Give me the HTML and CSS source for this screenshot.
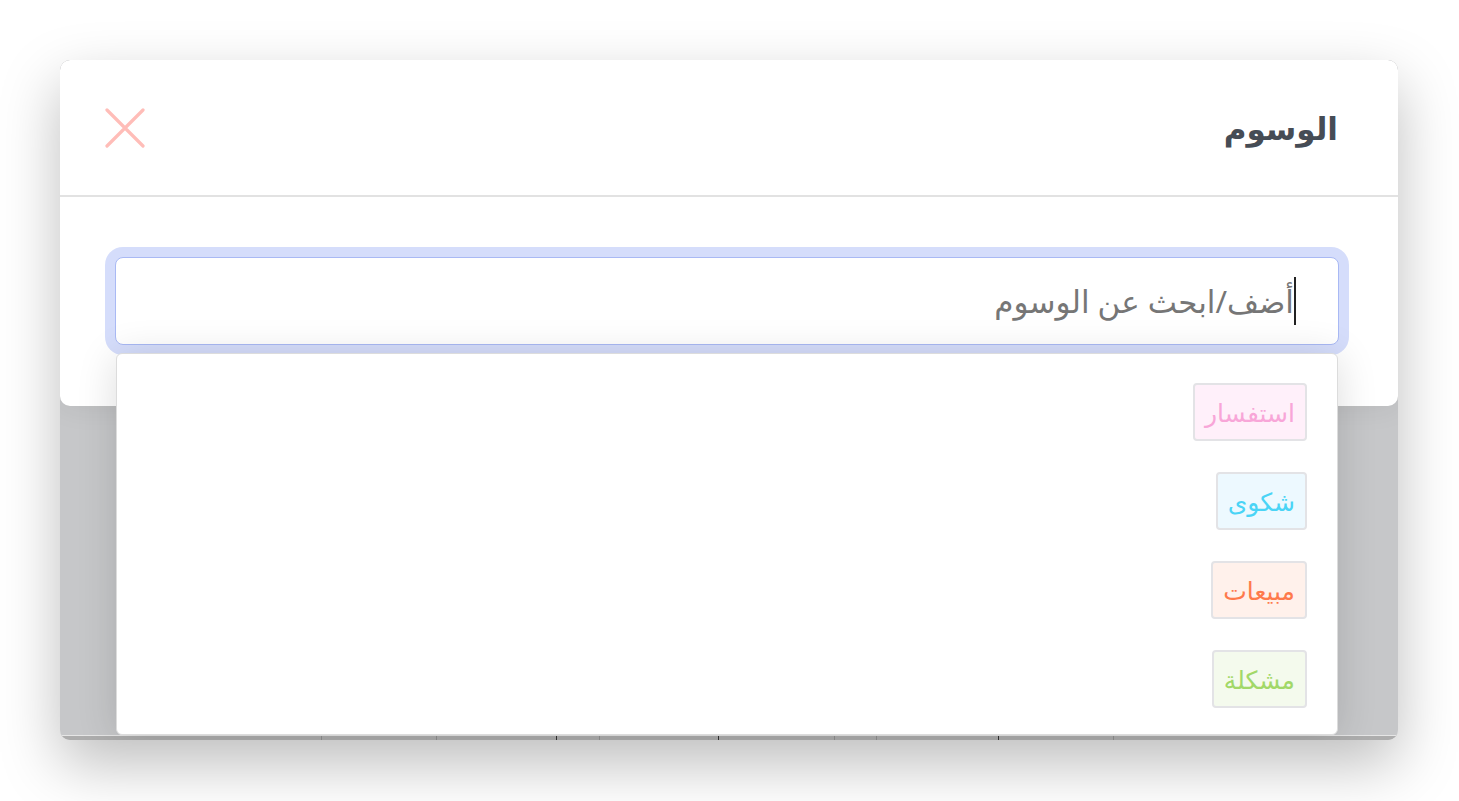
FILE: index.html
```html
<!DOCTYPE html>
<html lang="ar" dir="rtl">

<head>
    <meta charset="UTF-8">
    <title>الوسوم</title>
    <link rel="stylesheet" href="styles.css">
</head>

<body>
    <div class="window">
        <!-- نافذة الوسوم -->
        <div class="modal">
            <div class="modal-header">
                <h2 class="modal-title">الوسوم</h2>
                <button class="close-btn" type="button" aria-label="إغلاق">
                    <svg width="40" height="40" viewBox="0 0 40 40">
                        <path d="M2 2 L38 38 M38 2 L2 38" stroke="#ffbdb8" stroke-width="3.2" stroke-linecap="round" fill="none"/>
                    </svg>
                </button>
            </div>
            <div class="modal-body">
                <div class="search-box">
                    <span class="caret"></span>
                    <span class="placeholder">أضف/ابحث عن الوسوم</span>
                </div>
            </div>
        </div>

        <!-- محتوى الصفحة خلف النافذة -->
        <div class="backdrop"></div>
        <div class="table-edge">
            <span class="cell c1"></span>
            <span class="cell c2"></span>
            <span class="cell c3"></span>
            <span class="cell c4"></span>
            <span class="cell c5"></span>
            <span class="cell c6"></span>
            <span class="cell c7"></span>
            <span class="cell c8"></span>
            <span class="cell c9"></span>
        </div>

        <!-- قائمة الاقتراحات -->
        <ul class="dropdown">
            <li><span class="tag tag-pink">استفسار</span></li>
            <li><span class="tag tag-cyan">شكوى</span></li>
            <li><span class="tag tag-orange">مبيعات</span></li>
            <li><span class="tag tag-green">مشكلة</span></li>
        </ul>
    </div>
</body>

</html>
```

FILE: styles.css
```css
* {
    box-sizing: border-box;
}

html,
body {
    min-height: 100%;
}

body {
    margin: 0;
    padding: 60px 61px 61px 60px;
    min-height: 801px;
    background: #ffffff;
    font-family: "Noto Sans", "DejaVu Sans", sans-serif;
}

.window {
    position: relative;
    width: 1338px;
    height: 680px;
    display: flex;
    flex-direction: column;
    background: #c6c7c9;
    border-radius: 10px;
    box-shadow: 0 24px 60px rgba(0, 0, 0, 0.26);
    overflow: hidden;
}

.modal {
    height: 346px;
    background: #ffffff;
    border-radius: 10px;
    box-shadow: 0 0 30px rgba(0, 0, 0, 0.08);
}

.modal-header {
    height: 137px;
    display: flex;
    align-items: center;
    justify-content: space-between;
    padding: 0 60px 0 45px;
    border-bottom: 2px solid #e2e2e2;
}

.modal-title {
    margin: 0;
    font-size: 31px;
    font-weight: bold;
    color: #464c55;
}

.close-btn {
    padding: 0;
    border: none;
    background: none;
    width: 40px;
    height: 40px;
    cursor: pointer;
}

.close-btn svg {
    display: block;
}

.modal-body {
    padding: 60px 59px 0 55px;
}

.search-box {
    height: 88px;
    display: flex;
    align-items: center;
    padding: 0 42px;
    border: 1px solid #a9b9f4;
    border-radius: 8px;
    background: #ffffff;
    box-shadow: 0 0 0 10px #d5ddfb;
}

.caret {
    width: 2px;
    height: 48px;
    background: #222222;
}

.placeholder {
    font-size: 31px;
    color: #767676;
}

.backdrop {
    flex: 1;
}

.table-edge {
    height: 5px;
    display: flex;
    direction: ltr;
    background: #adadad;
    border-top: 1px solid #e6e6e6;
}

.cell {
    height: 100%;
    border-right: 1px solid #8f8f8f;
}

.c1 { width: 262px; }
.c2 { width: 115px; }
.c3 { width: 120px; border-right-color: #333; }
.c4 { width: 43px; }
.c5 { width: 119px; border-right-color: #333; }
.c6 { width: 116px; }
.c7 { width: 42px; }
.c8 { width: 122px; border-right-color: #333; }
.c9 { width: 115px; }

.dropdown {
    position: absolute;
    top: 293px;
    left: 56px;
    width: 1222px;
    height: 382px;
    margin: 0;
    padding: 29px 30px 0;
    list-style: none;
    display: flex;
    flex-direction: column;
    align-items: flex-start;
    gap: 31px;
    background: #ffffff;
    border: 1px solid #dcdcdc;
    border-radius: 6px;
    box-shadow: 0 4px 40px rgba(0, 0, 0, 0.14);
}

.dropdown li {
    display: flex;
}

.tag {
    height: 58px;
    display: flex;
    align-items: center;
    padding: 0 10px;
    font-size: 25px;
    border: 2px solid #e3e3e6;
    border-radius: 4px;
}

.tag-pink {
    color: #f8a6d8;
    background: #fff0fa;
}

.tag-cyan {
    color: #4ad4f6;
    background: #edf9ff;
}

.tag-orange {
    color: #fe7a4c;
    background: #fff1eb;
}

.tag-green {
    color: #a2d868;
    background: #f4faed;
}
```
